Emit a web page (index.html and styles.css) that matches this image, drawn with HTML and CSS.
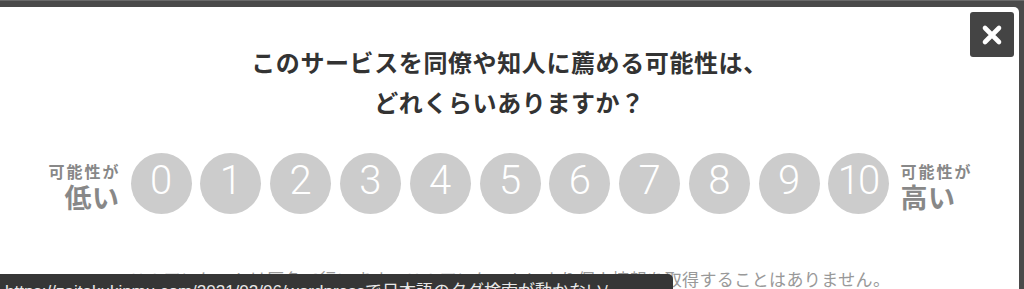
FILE: index.html
```html
<!DOCTYPE html>
<html lang="ja">
<head>
<meta charset="utf-8">
<title>アンケート</title>
<link rel="stylesheet" href="styles.css">
</head>
<body>
<div class="behind"><span class="behind-text">お問い合わせ送信</span></div>
<div class="page">
  <div class="modal">
    <button class="close" aria-label="閉じる">
      <svg width="44" height="45" viewBox="0 0 44 45"><path d="M15 16 L29 30 M29 16 L15 30" stroke="#fff" stroke-width="4.6" stroke-linecap="round" fill="none"/></svg>
    </button>
    <h1 class="title">このサービスを同僚や知人に薦める可能性は、<br>どれくらいありますか？</h1>
    <div class="scale">
      <div class="label label-left"><span class="label-small">可能性が</span><span class="label-big">低い</span></div>
      <div class="circles">
        <span class="circle">0</span>
        <span class="circle">1</span>
        <span class="circle">2</span>
        <span class="circle">3</span>
        <span class="circle">4</span>
        <span class="circle">5</span>
        <span class="circle">6</span>
        <span class="circle">7</span>
        <span class="circle">8</span>
        <span class="circle">9</span>
        <span class="circle circle-ten">10</span>
      </div>
      <div class="label label-right"><span class="label-small">可能性が</span><span class="label-big">高い</span></div>
    </div>
    <p class="note">このアンケートは匿名で行います。このアンケートにより個人情報を取得することはありません。</p>
  </div>
</div>
<div class="status">https://zaitakukinmu.com/2021/02/06/wordpressで日本語のタグ検索が動かない/</div>
</body>
</html>
```
FILE: styles.css
```css
html, body {
  margin: 0;
  height: 289px;
  overflow: hidden;
}
body {
  background: #4a4a4a;
  font-family: "Noto Sans CJK JP", "Noto Sans", sans-serif;
  position: relative;
}
.behind {
  position: absolute;
  top: 0;
  left: 0;
  right: 0;
  height: 7px;
  overflow: hidden;
  border-top: 1px solid #6a6a6a;
  box-sizing: border-box;
}
.behind-text {
  position: absolute;
  left: 786px;
  top: -31px;
  font-size: 24px;
  font-weight: 700;
  color: #1c1c1c;
  white-space: nowrap;
  letter-spacing: 2px;
}
.page {
  padding: 7px 5px 0 0;
}
.modal {
  position: relative;
  background: #fff;
  border-top-right-radius: 5px;
  height: 282px;
  box-sizing: border-box;
  padding-top: 35px;
}
.close {
  position: absolute;
  top: 5px;
  right: 5px;
  width: 44px;
  height: 45px;
  padding: 0;
  border: 0;
  border-radius: 3px;
  background: #444;
  display: flex;
  align-items: center;
  justify-content: center;
}
.close svg {
  display: block;
}
.title {
  margin: 0;
  text-align: center;
  font-size: 24px;
  font-weight: 700;
  line-height: 40px;
  letter-spacing: 0.6px;
  color: #333;
}
.scale {
  margin-top: 31px;
  display: flex;
  align-items: center;
  justify-content: center;
}
.circles {
  display: flex;
  gap: 8.8px;
  margin: 0 11px 0 12px;
}
.circle {
  width: 61px;
  height: 61px;
  border-radius: 50%;
  background: #cccccc;
  color: #fff;
  font-family: Roboto, "Liberation Sans", sans-serif;
  font-weight: 300;
  font-size: 40px;
  line-height: 55px;
  padding-bottom: 6px;
  box-sizing: border-box;
  text-align: center;
}
.circle-ten {
  letter-spacing: -2px;
  text-indent: -2px;
}
.label {
  width: 73px;
  display: flex;
  flex-direction: column;
  color: #888;
  font-weight: 700;
  padding-top: 4px;
}
.label-left {
  align-items: flex-end;
}
.label-right {
  align-items: flex-start;
}
.label-small {
  font-size: 16px;
  line-height: 22px;
  letter-spacing: 2px;
}
.label-left .label-small {
  margin-right: -2px;
}
.label-big {
  font-size: 27px;
  line-height: 30px;
  letter-spacing: 0.5px;
}
.label-left .label-big {
  margin-right: -1px;
}
.note {
  margin: 53px 0 0;
  text-align: center;
  font-size: 17px;
  line-height: 24px;
  letter-spacing: 0.4px;
  color: #999;
  font-weight: 400;
}
.status {
  position: fixed;
  left: 0;
  top: 274px;
  width: 668px;
  height: 30px;
  padding: 8px 0 0 5px;
  background: #363636;
  border-top-right-radius: 5px;
  color: #e8e8e8;
  font-family: "Liberation Sans", "Noto Sans CJK JP", sans-serif;
  font-size: 17px;
  line-height: 20px;
  white-space: nowrap;
  overflow: hidden;
}
```
